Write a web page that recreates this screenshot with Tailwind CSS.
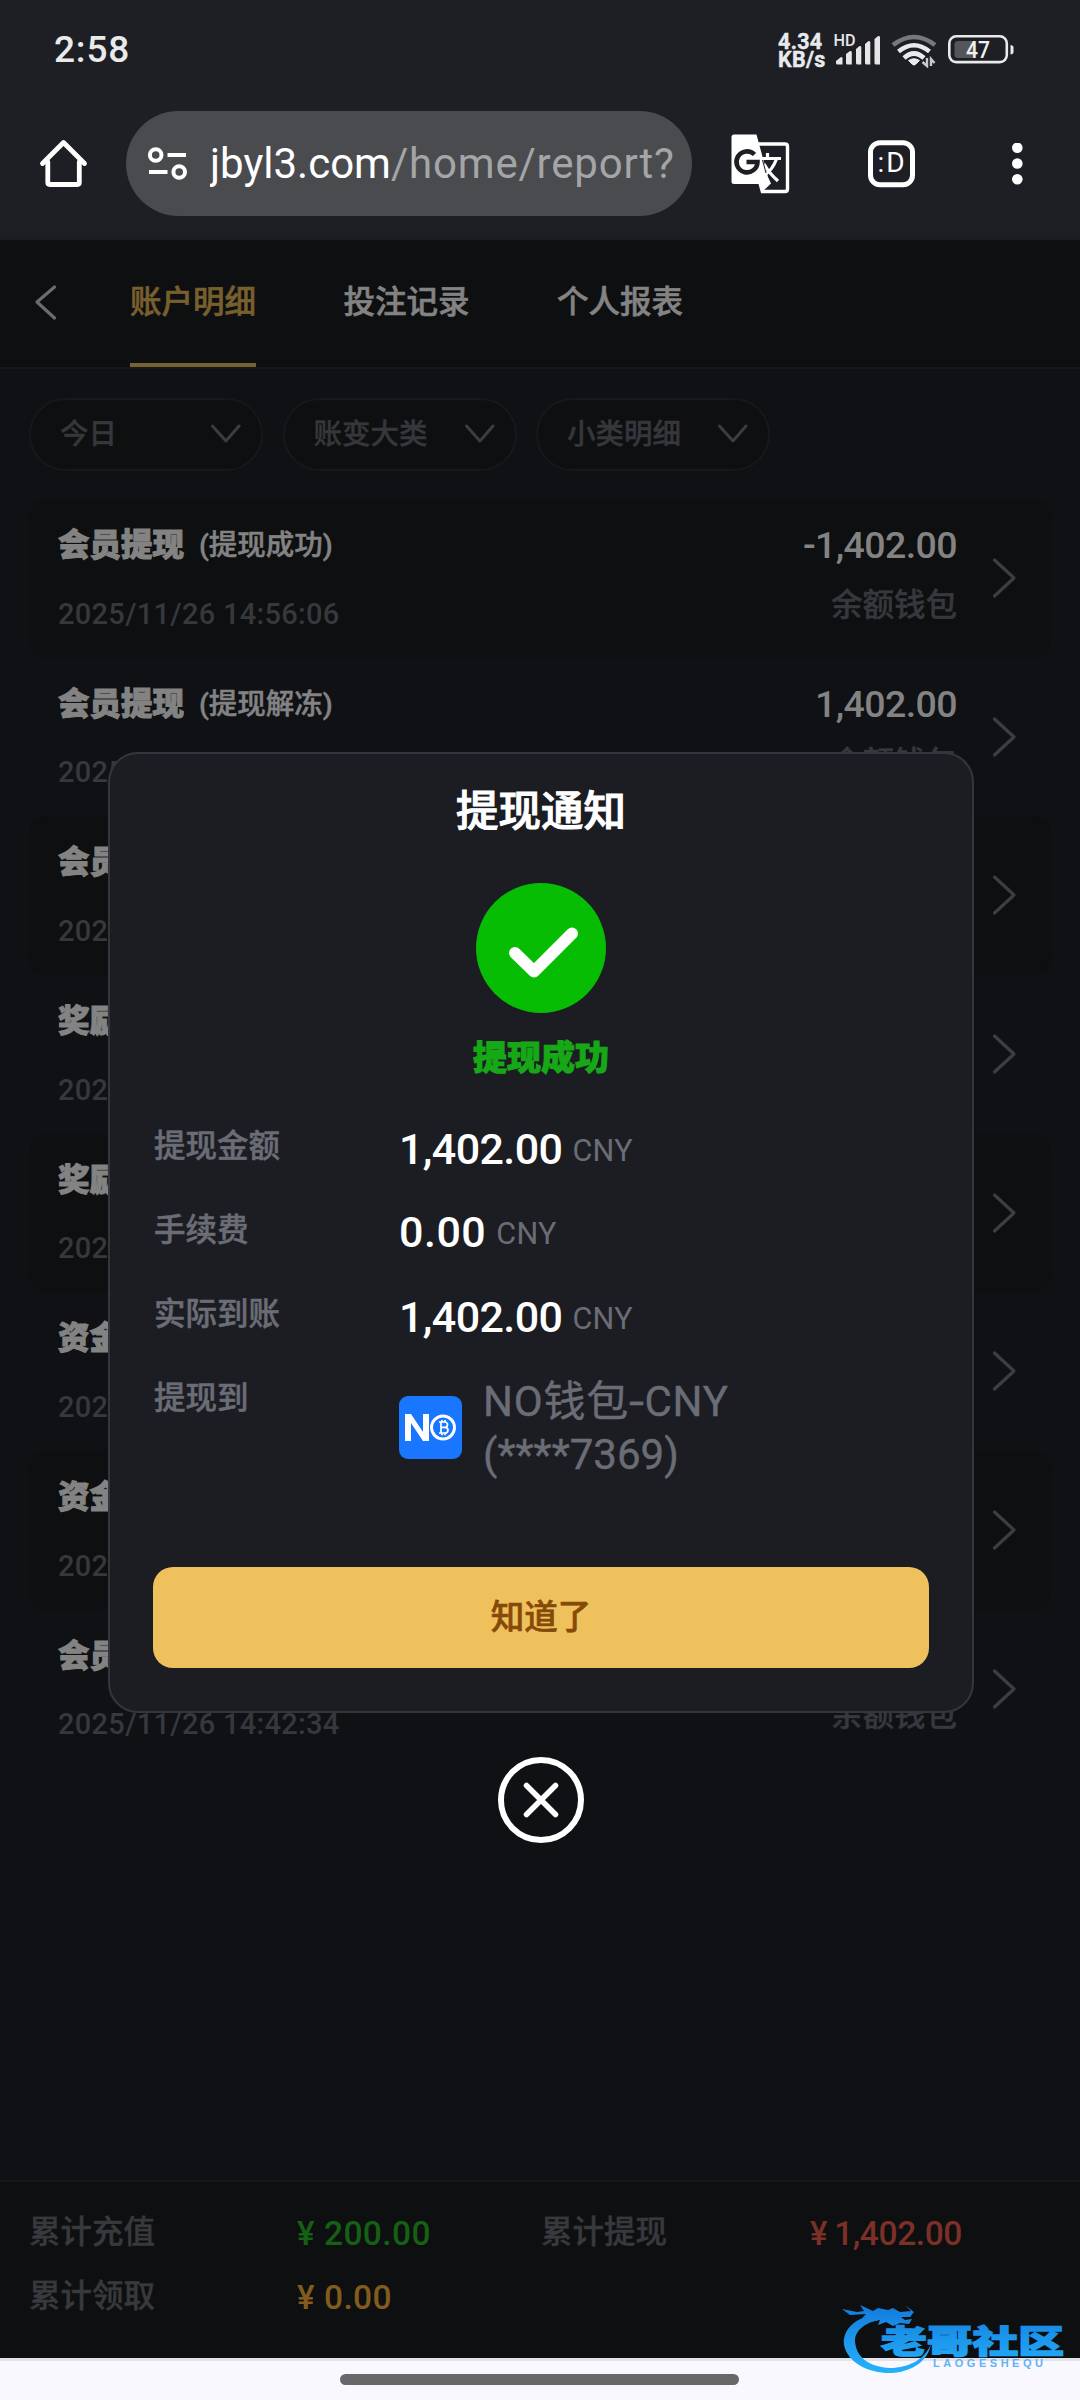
<!DOCTYPE html>
<html lang="zh-CN">
<head>
<meta charset="utf-8">
<title>账户明细</title>
<script src="https://cdn.jsdelivr.net/npm/@tailwindcss/browser@4"></script>
</head>
<body class="relative flex h-[2400px] w-[1080px] flex-col overflow-hidden bg-[#0f1114] font-[Roboto,'Noto_Sans_CJK_SC',sans-serif] text-[31.5px] font-medium">

<!-- status bar -->
<div class="flex h-[100px] shrink-0 items-center bg-[#1e1f24] pl-[54px] text-[#e9eaec]">
  <div class="w-[724px] text-[37px] leading-[40px] tracking-[0.8px]">2:58</div>
  <div class="w-[55px] pt-[2px] text-[21.500px] leading-[18.5px] font-bold tracking-[0.3px] [-webkit-text-stroke:0.4px]">4.34<br>KB/s</div>
  <svg class="h-[36px] w-[48px] shrink-0" viewBox="832 32 48 36" fill="#e6e6e8">
    <text x="832.5" y="46" font-size="16" font-family="Roboto" font-weight="500" textLength="22" lengthAdjust="spacingAndGlyphs">HD</text>
    <path d="M835 61l5-4q1.500 0 1.500 1v6.500h-5q-1.500 0-1.500-1.500zM845 54l4-3q1.800 0 1.800 1v12.500h-4.300q-1.500 0-1.500-1.500zM855 49l3.500-3q1.800 0 1.800 1v17.500h-3.800q-1.500 0-1.500-1.500zM864 44l3.500-3q1.800 0 1.800 1v22.500h-3.800q-1.500 0-1.500-1.500zM873.500 39l3.700-3q1.800 0 1.800 1v27.500h-4q-1.500 0-1.500-1.500z"/>
  </svg>
  <svg class="ml-[10px] h-[36px] w-[46px] shrink-0" viewBox="890 32 46 36" fill="none" stroke-width="4.600">
    <path d="M892 45Q913 29 934 45" stroke="#77787c"/>
    <path d="M897.500 51.500Q913 39 928.500 51.500M903 58Q913 49 923 58" stroke="#e9eaec"/>
    <path d="M907.500 60.500Q913 57 918.500 60.500L914.500 64.500q-1.500 1-3 0z" fill="#e9eaec" stroke="#e9eaec" stroke-width="1"/>
    <path d="M926 58v8l-4.500-4M930 66v-7l3.500 4" stroke="#c8c9cc" stroke-width="2.400"/>
  </svg>
  <svg class="ml-[10px] h-[36px] w-[70px] shrink-0" viewBox="947 32 70 36">
    <rect x="949.300" y="36.300" width="57.500" height="25.800" rx="7" fill="none" stroke="#e9eaec" stroke-width="2.600"/>
    <path d="M958 41h16v17h-16q-3.500 0-3.500-3.500v-10q0-3.500 3.500-3.500z" fill="#55565a"/>
    <path d="M1010.500 45q3 .5 3 2.500v4.500q0 2-3 2.500z" fill="#e9eaec"/>
    <text x="966" y="58" font-size="23" font-family="Roboto" font-weight="500" fill="#f0f0f2" textLength="24" lengthAdjust="spacingAndGlyphs">47</text>
  </svg>
</div>

<!-- browser toolbar -->
<div class="flex h-[140px] shrink-0 items-start border-b-3 border-[#1b1c21] bg-[#1e1f24] pt-[11px] pl-[38px]">
  <svg class="mt-[27px] h-[52px] w-[52px]" viewBox="38 138 52 52" fill="none" stroke="#fff" stroke-width="4.800" stroke-linejoin="round" stroke-linecap="round">
    <path d="M42.500 163.500L63.500 142.500L84.500 163.500M47.800 162v20.500q0 2 2 2h27.500q2 0 2-2V162"/>
  </svg>
  <div class="ml-[36px] flex h-[105px] w-[566px] items-center rounded-full bg-[#4a4b4f] pl-[20px]">
    <svg class="h-[38px] w-[44px] shrink-0" viewBox="146 145 44 38" fill="none" stroke="#fff" stroke-width="4">
      <circle cx="155.700" cy="155" r="5.800"/><circle cx="179.200" cy="172" r="5.800"/>
      <path d="M167.500 155h18.500M149 172h18.500"/>
    </svg>
    <div class="ml-[20px] w-[480px] overflow-hidden pt-[1px] text-[42px] leading-[56px] font-normal whitespace-nowrap text-white">jbyl3.com<span class="tracking-[0.8px] text-[#a4a5a7]">/home/report?</span></div>
  </div>
  <svg class="ml-[37px] h-[64px] w-[64px] mt-[21px]" viewBox="729 132 64 64" fill="none">
    <path d="M758 144h27q2.500 0 2.500 2.500v42.500q0 2.500-2.500 2.500h-24" stroke="#fff" stroke-width="3.400"/>
    <path d="M734 134.500h22.500l11.500 42.500 3 6.500-10 9.500-2.500-9h-24.500q-2.500 0-2.500-2.500v-44.500q0-2.500 2.500-2.500z" fill="#fff"/>
    <path d="M754.500 154.500a10.500 10.500 0 1 0 3 7.500h-11" stroke="#1e1f24" stroke-width="4.600"/>
    <path d="M761 158.500h20M767.500 153v5.500M776.500 159q-4 11-12 16M764 164q5 9 14 17" stroke="#fff" stroke-width="3.200"/>
    <path d="M762.500 160l3.500 13" stroke="#1e1f24" stroke-width="1"/>
  </svg>
  <svg class="mt-[27px] ml-[72px] h-[52px] w-[52px]" viewBox="865 138 52 52">
    <rect x="870.500" y="142.700" width="42" height="42" rx="9.500" fill="none" stroke="#fff" stroke-width="5"/>
    <text x="877.500" y="172" font-size="28" font-family="Roboto" font-weight="400" fill="#fff" textLength="27">:D</text>
  </svg>
  <svg class="mt-[32px] ml-[93px] h-[44px] w-[14px]" viewBox="1010 143 14 44" fill="#fff">
    <circle cx="1017.300" cy="147.800" r="5.300"/><circle cx="1017.300" cy="163.500" r="5.300"/><circle cx="1017.300" cy="179.200" r="5.300"/>
  </svg>
</div>

<!-- tabs -->
<div class="flex h-[129px] shrink-0 border-b-2 border-[#17181b] bg-[#0e0f10] pl-[34px] text-[#838383]">
  <svg class="mt-[43px] mr-[70px] h-[38px] w-[26px]" viewBox="34 283 26 38" fill="none" stroke="#6b6c6f" stroke-width="3.200" stroke-linecap="round" stroke-linejoin="round"><path d="M54.500 287L37 302L54.500 318"/></svg>
  <div class="flex gap-[87.500px] leading-[125px] [-webkit-text-stroke:0.6px]">
    <div class="h-[127px] border-b-4 border-[#786132] text-[#785f2e]">账户明细</div>
    <div>投注记录</div>
    <div>个人报表</div>
  </div>
</div>

<!-- filters -->
<div id="filters" class="flex shrink-0 gap-[19.500px] pt-[29px] pl-[29px] pb-[28px]"></div>

<!-- records -->
<div id="records" class="flex flex-1 flex-col px-[29px]"></div>

<!-- totals -->
<div class="grid h-[178px] shrink-0 grid-cols-[268px_244px_269px_1fr] content-start border-t-2 border-[#17181b] bg-[#0e0f10] pt-[19px] pl-[29px] leading-[63px] text-[#38393d]">
  <div class="leading-[64px] [-webkit-text-stroke:0.4px]">累计充值</div>
  <div class="flex items-center text-[33.500px] tracking-[0.4px] text-[#156015]"><span class="mr-[9px] text-[33px]">¥</span>200.00</div>
  <div class="leading-[64px] [-webkit-text-stroke:0.4px]">累计提现</div>
  <div class="flex items-center text-[33.500px] tracking-[-0.4px] text-[#7b3028]"><span class="mr-[7px] text-[33px]">¥</span>1,402.00</div>
  <div class="leading-[64px] [-webkit-text-stroke:0.4px]">累计领取</div>
  <div class="flex items-center text-[33.500px] tracking-[0.4px] text-[#825c1c]"><span class="mr-[9px] text-[33px]">¥</span>0.00</div>
</div>

<!-- gesture bar -->
<div class="flex h-[42px] shrink-0 justify-center border-t-3 border-[#e4e4e8] bg-[#f8f8fe] pt-[13px] pr-[2px]">
  <div class="h-[11px] w-[399px] rounded-full bg-[#68686b]"></div>
</div>

<!-- notice dialog -->
<div class="absolute top-[752px] left-[108px] flex h-[961px] w-[866px] flex-col rounded-[30px] border-2 border-[#34363d] bg-[#1c1d22] px-[43px] text-[#6a6d76]">
  <div class="mt-[28px] text-center text-[42.500px] leading-[60px] text-white [-webkit-text-stroke:1px]">提现通知</div>
  <svg class="mx-auto mt-[41px] h-[130px] w-[130px]" viewBox="476 883 130 130">
    <circle cx="541" cy="948" r="65" fill="#07bd04"/>
    <path d="M515 953L534 971.500L572 933.500" fill="none" stroke="#fff" stroke-width="12" stroke-linecap="round" stroke-linejoin="round"/>
  </svg>
  <div class="mt-[25px] text-center text-[34px] leading-[40px] font-black text-[#17a817] [-webkit-text-stroke:1px]">提现成功</div>
  <div class="mt-[27px] grid grid-cols-[245px_1fr] pl-[1px] leading-[84px]">
    <div class="leading-[83px] [-webkit-text-stroke:0.5px]">提现金额</div>
    <div class="flex h-[84px] items-baseline text-[43px] leading-[88px] tracking-[-0.6px] text-white"><span>1,402.00</span><span class="relative -top-[3px] ml-[10px] text-[30.500px] leading-[80px] tracking-[0.3px] text-[#6a6d76] font-normal">CNY</span></div>
    <div class="leading-[83px] [-webkit-text-stroke:0.5px]">手续费</div>
    <div class="flex h-[84px] items-baseline text-[43px] leading-[87px] tracking-[0.5px] text-white"><span>0.00</span><span class="relative -top-[3px] ml-[10px] text-[30.500px] leading-[80px] tracking-[0.3px] text-[#6a6d76] font-normal">CNY</span></div>
    <div class="leading-[83px] [-webkit-text-stroke:0.5px]">实际到账</div>
    <div class="flex h-[84px] items-baseline text-[43px] leading-[88px] tracking-[-0.6px] text-white"><span>1,402.00</span><span class="relative -top-[3px] ml-[10px] text-[30.500px] leading-[80px] tracking-[0.3px] text-[#6a6d76] font-normal">CNY</span></div>
    <div class="leading-[83px] [-webkit-text-stroke:0.5px]">提现到</div>
    <div class="flex pt-[18px]">
      <svg class="mt-[21px] h-[63px] w-[63px] shrink-0" viewBox="0 0 63 63">
        <rect width="63" height="63" rx="9" fill="#1877fe"/>
        <path d="M6 45V18h6l12 18V18h6v27h-6L12 27v18z" fill="#fff"/>
        <circle cx="44" cy="31.500" r="13.500" fill="#1877fe"/>
        <circle cx="44" cy="31.500" r="11.500" fill="none" stroke="#fff" stroke-width="2.900"/>
        <path d="M40 26h5.500q3 0 3 2.700t-3 2.700h-3.500M42 26v11M45.500 31.400q3.500 0 3.500 2.800t-3.500 2.800h-5.500M43 24v2M46 24v2M43 37v2.300M46 37v2.300" fill="none" stroke="#fff" stroke-width="1.700"/>
      </svg>
      <div class="ml-[21px] text-[42px] leading-[53px] font-normal whitespace-nowrap"><span class="tracking-[0.8px] [-webkit-text-stroke:0.4px]">NO钱包<span class="mr-[3px] inline-block origin-left scale-x-130">-</span>CNY</span><br><span class="[-webkit-text-stroke:0.4px]">(****7369)</span></div>
    </div>
  </div>
  <div class="mt-auto mb-[43px] h-[101px] shrink-0 rounded-[20px] bg-[#efc15c] text-center text-[33.600px] leading-[102px] text-[#854a08] [-webkit-text-stroke:0.6px]">知道了</div>
</div>
<svg class="absolute top-[1756px] left-[497px] h-[88px] w-[88px]" viewBox="497 1756 88 88" fill="none" stroke="#fff" stroke-linecap="round">
  <circle cx="541" cy="1800" r="40" stroke-width="6"/><path d="M526.500 1785.500l29 29M555.500 1785.500l-29 29" stroke-width="5.500"/>
</svg>

<!-- community logo -->
<svg class="absolute top-[2296px] left-[838px] h-[82px] w-[232px]" viewBox="838 2296 232 82">
  <defs><linearGradient id="lg" x1="0" y1="2300" x2="0" y2="2372" gradientUnits="userSpaceOnUse"><stop offset="0" stop-color="#1177d8"/><stop offset="1" stop-color="#25b1fc"/></linearGradient></defs>
  <g fill="url(#lg)">
    <path d="M882 2314C858 2315 842 2328 844 2345C848 2363 869 2374 893 2373C913 2371 928 2361 931 2344C925 2359 909 2368 890 2368C870 2367 856 2358 855 2341C855 2330 866 2321 885 2319z"/>
    <path d="M842 2309L857 2312L864 2311L860 2305L873 2311L878 2308L888 2310L893 2308L900 2312L911 2311L905 2305L914 2312L910 2317L901 2317L905 2320L912 2319L909 2324L900 2323L893 2326L886 2322L878 2325L880 2320L870 2322L874 2316L862 2318L866 2314L850 2315z"/>
    <text x="881" y="2353" font-size="32" font-family="'Noto Sans CJK SC'" font-weight="900" stroke="url(#lg)" stroke-width="1.400" transform="translate(881 0) scale(1.430 1) translate(-881 0)">老哥社区</text>
    <text x="933" y="2367" font-size="11" font-family="Liberation Sans" font-weight="700" textLength="110" fill="#5fb4f5">LAOGESHEQU</text>
  </g>
</svg>

<script>
const filters = ['今日', '账变大类', '小类明细'];
document.getElementById('filters').innerHTML = filters.map(t => `
  <div class="flex h-[73px] w-[234px] items-center justify-between rounded-full border-2 border-[#17181b] bg-[#0e0f10] pr-[18px] pl-[29px] text-[28.500px] leading-[60px] text-[#36373c] [-webkit-text-stroke:0.4px]">
    <span>${t}</span>
    <svg class="h-[22px] w-[34px]" viewBox="0 0 34 22" fill="none" stroke="#3c3d41" stroke-width="3" stroke-linecap="round" stroke-linejoin="round"><path d="M3.500 2L17 17L30 2"/></svg>
  </div>`).join('');

const records = [
  ['会员提现', '(提现成功)', '2025/11/26 14:56:06', '-1,402.00'],
  ['会员提现', '(提现解冻)', '2025/11/26', '1,402.00'],
  ['会员提现', '', '2025/11/26', ''],
  ['奖励', '', '2025/11/26', ''],
  ['奖励', '', '2025/11/26', ''],
  ['资金', '', '2025/11/26', ''],
  ['资金', '', '2025/11/26', ''],
  ['会员提现', '', '2025/11/26 14:42:34', '']
];
document.getElementById('records').innerHTML = records.map(([title, note, date, amount]) => `
  <div class="flex h-[158.700px] shrink-0 rounded-[18px] pt-[23px] pl-[29px] pr-[32px] odd:bg-[#0e0f10]">
    <div class="flex-1">
      <div class="flex h-[46px] leading-[48px] text-[#838383]"><span class="w-[141px] font-black [-webkit-text-stroke:1px]">${title}</span><span class="text-[28.500px] [-webkit-text-stroke:0.5px]">${note}</span></div>
      <div class="mt-[25.500px] text-[29px] leading-[40px] tracking-[0.3px] text-[#37383d]">${date}</div>
    </div>
    <div class="text-right">
      <div class="h-[46px] text-[37.500px] leading-[46px] tracking-[-0.6px] text-[#838383]">${amount}</div>
      <div class="mt-[17.500px] leading-[40px] text-[#37383d] [-webkit-text-stroke:0.4px]">余额钱包</div>
    </div>
    <svg class="mt-[35px] ml-[34px] h-[42px] w-[28px]" viewBox="0 0 28 42" fill="none" stroke="#3d3e41" stroke-width="3.200" stroke-linecap="round" stroke-linejoin="round"><path d="M3.500 3L23 21L3.500 39"/></svg>
  </div>`).join('');
</script>
</body>
</html>
